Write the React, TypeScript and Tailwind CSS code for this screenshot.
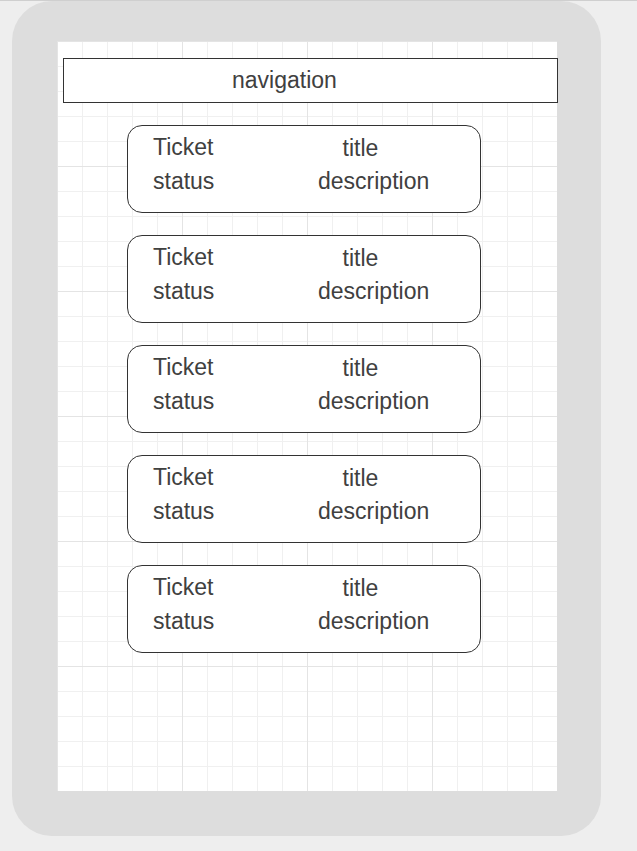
const tickets = [0, 1, 2, 3, 4];

function TicketCard() {
  return (
    <div className="h-[88px] w-[354px] shrink-0 rounded-[15px] border border-[#333333] bg-white text-[23px] leading-[34.5px] text-[#404040]">
      <div className="flex">
        <div className="flex w-[190px] flex-col pl-[25px] pt-[3.5px]">
          <span>Ticket</span>
          <span>status</span>
        </div>
        <div className="flex flex-col pt-[4.5px]">
          <span className="ml-[24.5px]">title</span>
          <span className="-mt-[1px]">description</span>
        </div>
      </div>
    </div>
  );
}

export default function App() {
  return (
    <div
      className="h-[851px] w-[637px] overflow-hidden border-t border-[#cfcfcf] bg-[#eeeeee]"
      style={{ fontFamily: '"Liberation Sans", Arial, sans-serif' }}
    >
      <div className="ml-[12px] h-[835px] w-[589px] rounded-[40px] bg-[#dddddd] pl-[45px] pt-[40px]">
        <div className="h-[750px] w-[500px] bg-white bg-[linear-gradient(to_right,#e4e4e4_1px,transparent_1px),linear-gradient(to_bottom,#e4e4e4_1px,transparent_1px),linear-gradient(to_right,#f0f0f0_1px,transparent_1px),linear-gradient(to_bottom,#f0f0f0_1px,transparent_1px)] bg-[size:125px_125px,125px_125px,25px_25px,25px_25px]">
          <div className="flex flex-col pt-[17px]">
            <div className="ml-[6px] flex h-[45px] w-[495px] items-center border border-[#333333] bg-white pl-[168px] text-[23px] text-[#404040]">
              navigation
            </div>
            <div className="mt-[22px] flex flex-col gap-[22px] pl-[70px]">
              {tickets.map((t) => (
                <TicketCard key={t} />
              ))}
            </div>
          </div>
        </div>
      </div>
    </div>
  );
}
